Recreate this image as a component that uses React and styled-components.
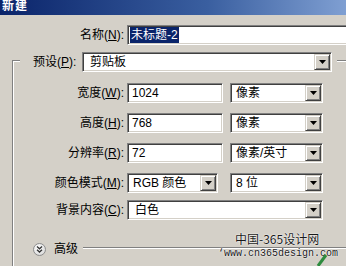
import React from "react";
import styled, { createGlobalStyle } from "styled-components";

const Global = createGlobalStyle`
  html, body { margin: 0; padding: 0; background: #d4d0c8; }
  body { font-family: "Liberation Sans", "Noto Sans CJK SC", sans-serif; font-size: 12px; color: #000; }
`;

const Page = styled.div`
  position: relative;
  width: 346px;
  height: 266px;
  overflow: hidden;
  background: #d4d0c8;
`;

const TitleBar = styled.div`
  height: 15px;
  background: linear-gradient(to right, #0a246a 0%, #3a5fa0 60%, #7f9fd2 100%);
  color: #fff;
  font-weight: bold;
  font-size: 12px;
  line-height: 12px;
  padding-left: 2px;
  letter-spacing: 1px;
`;

const Row = styled.div`
  display: grid;
  grid-template-columns: ${(p) => p.$label}px auto;
  column-gap: 3px;
  align-items: center;
  height: 20px;
  margin-top: ${(p) => p.$mt}px;
`;

const Label = styled.label`
  text-align: right;
  white-space: nowrap;
  line-height: 14px;
`;

const Field = styled.div`
  box-sizing: border-box;
  height: ${(p) => p.$h || 20}px;
  width: ${(p) => p.$w}px;
  background: #fff;
  border-top: 1px solid #808080;
  border-left: 1px solid #808080;
  border-right: 1px solid #fff;
  border-bottom: 1px solid #fff;
  box-shadow: inset 1px 1px 0 #404040, inset -1px -1px 0 #d4d0c8;
  display: flex;
  align-items: center;
  padding: 1px;
  white-space: nowrap;
  line-height: 14px;
`;

const Value = styled.span`
  flex: 1;
  padding-left: ${(p) => p.$pl || 3}px;
`;

const Selected = styled.span`
  margin-left: 1px;
  background: #0a246a;
  color: #fff;
  padding: 1px 1px;
  line-height: 14px;
`;

const DropBtn = styled.div`
  box-sizing: border-box;
  width: 16px;
  height: 100%;
  background: #d4d0c8;
  border: 1px solid;
  border-color: #d4d0c8 #404040 #404040 #d4d0c8;
  box-shadow: inset 1px 1px 0 #fff, inset -1px -1px 0 #808080;
  display: flex;
  align-items: center;
  justify-content: center;
`;

const Fieldset = styled.div`
  margin: 15px 0 0 12px;
  width: 346px;
  height: 220px;
  border-top: 1px solid #808080;
  border-left: 1px solid #808080;
  box-shadow: inset 1px 1px 0 #fff;
`;

const Legend = styled.div`
  box-sizing: border-box;
  margin: -9px 0 0 7px;
  width: 317px;
  height: 20px;
  padding: 0 5px 0 13px;
  background: #d4d0c8;
  display: flex;
  align-items: center;
  gap: 3px;
`;

const LegendLabel = styled.label`
  width: 46px;
  white-space: nowrap;
  line-height: 14px;
`;

const Controls = styled.div`
  width: 196px;
  display: flex;
  justify-content: space-between;
  align-items: center;
`;

const AdvRow = styled.div`
  display: flex;
  align-items: center;
  height: 12px;
  margin-top: 23px;
  padding-left: 20px;
`;

const AdvText = styled.span`
  margin-left: 8px;
  line-height: 14px;
`;

const Rule = styled.div`
  flex: 1;
  margin: -3px 0 0 5px;
  border-top: 1px solid #808080;
  border-bottom: 1px solid #fff;
`;

const Mark = styled.div`
  position: absolute;
  left: ${(p) => p.$x}px;
  top: ${(p) => p.$y}px;
  color: #1a1a1a;
  white-space: nowrap;
  text-shadow: 0 0 1px #fff, 0 0 2px #fff;
`;

const MarkCn = styled(Mark)`
  font-family: "Noto Sans CJK SC", sans-serif;
  font-size: 12px;
  line-height: 13px;
`;

const MarkUrl = styled(Mark)`
  font-family: "Liberation Mono", monospace;
  font-size: 10px;
  line-height: 11px;
`;

const Stroke = styled.svg`
  position: absolute;
  left: 316px;
  top: 253px;
`;

const Arrow = () => (
  <svg width="7" height="4" viewBox="0 0 7 4">
    <path d="M0 0h7L3.5 4z" fill="#000" />
  </svg>
);

const Select = ({ w, children, pl }) => (
  <Field $w={w}>
    <Value $pl={pl}>{children}</Value>
    <DropBtn>
      <Arrow />
    </DropBtn>
  </Field>
);

const Input = ({ w, children }) => (
  <Field $w={w}>
    <Value>{children}</Value>
  </Field>
);

const Chevron = () => (
  <svg width="13" height="13" viewBox="0 0 13 13">
    <defs>
      <radialGradient id="cg" cx="0.4" cy="0.35" r="0.7">
        <stop offset="0" stopColor="#ffffff" />
        <stop offset="1" stopColor="#d8d8d8" />
      </radialGradient>
    </defs>
    <circle cx="6.5" cy="6.5" r="6" fill="url(#cg)" stroke="#8c8c8c" strokeWidth="1" />
    <path d="M4 3.5l2.5 2.3L9 3.5M4 6.8l2.5 2.3L9 6.8" fill="none" stroke="#333" strokeWidth="1.3" />
  </svg>
);

export default function App() {
  return (
    <Page>
      <Global />
      <TitleBar>新建</TitleBar>
      <Row $label={124} $mt={10}>
        <Label>名称(<u>N</u>):</Label>
        <Field $w={240}>
          <Selected>未标题-2</Selected>
        </Field>
      </Row>
      <Fieldset>
        <Legend>
          <LegendLabel>预设(<u>P</u>):</LegendLabel>
          <Select w={250} pl={6}>剪贴板</Select>
        </Legend>
        <Row $label={111} $mt={11}>
          <Label>宽度(<u>W</u>):</Label>
          <Controls>
            <Input w={96}>1024</Input>
            <Select w={93} pl={4}>像素</Select>
          </Controls>
        </Row>
        <Row $label={111} $mt={10}>
          <Label>高度(<u>H</u>):</Label>
          <Controls>
            <Input w={96}>768</Input>
            <Select w={93} pl={4}>像素</Select>
          </Controls>
        </Row>
        <Row $label={111} $mt={10}>
          <Label>分辨率(<u>R</u>):</Label>
          <Controls>
            <Input w={96}>72</Input>
            <Select w={93} pl={4}>像素/英寸</Select>
          </Controls>
        </Row>
        <Row $label={111} $mt={10}>
          <Label>颜色模式(<u>M</u>):</Label>
          <Controls>
            <Select w={91} pl={4}>RGB 颜色</Select>
            <Select w={93} pl={4}>8 位</Select>
          </Controls>
        </Row>
        <Row $label={111} $mt={7}>
          <Label>背景内容(<u>C</u>):</Label>
          <Controls>
            <Select w={196} pl={6}>白色</Select>
          </Controls>
        </Row>
        <AdvRow>
          <Chevron />
          <AdvText>高级</AdvText>
          <Rule />
        </AdvRow>
      </Fieldset>
      <MarkCn $x={235} $y={232}>中国-365设计网</MarkCn>
      <MarkUrl $x={218} $y={248}>‘www.cn365design.com</MarkUrl>
      <Stroke width="12" height="13" viewBox="0 0 12 13">
        <path d="M2 13L10 2" stroke="#2e8b3e" strokeWidth="3" />
      </Stroke>
    </Page>
  );
}
